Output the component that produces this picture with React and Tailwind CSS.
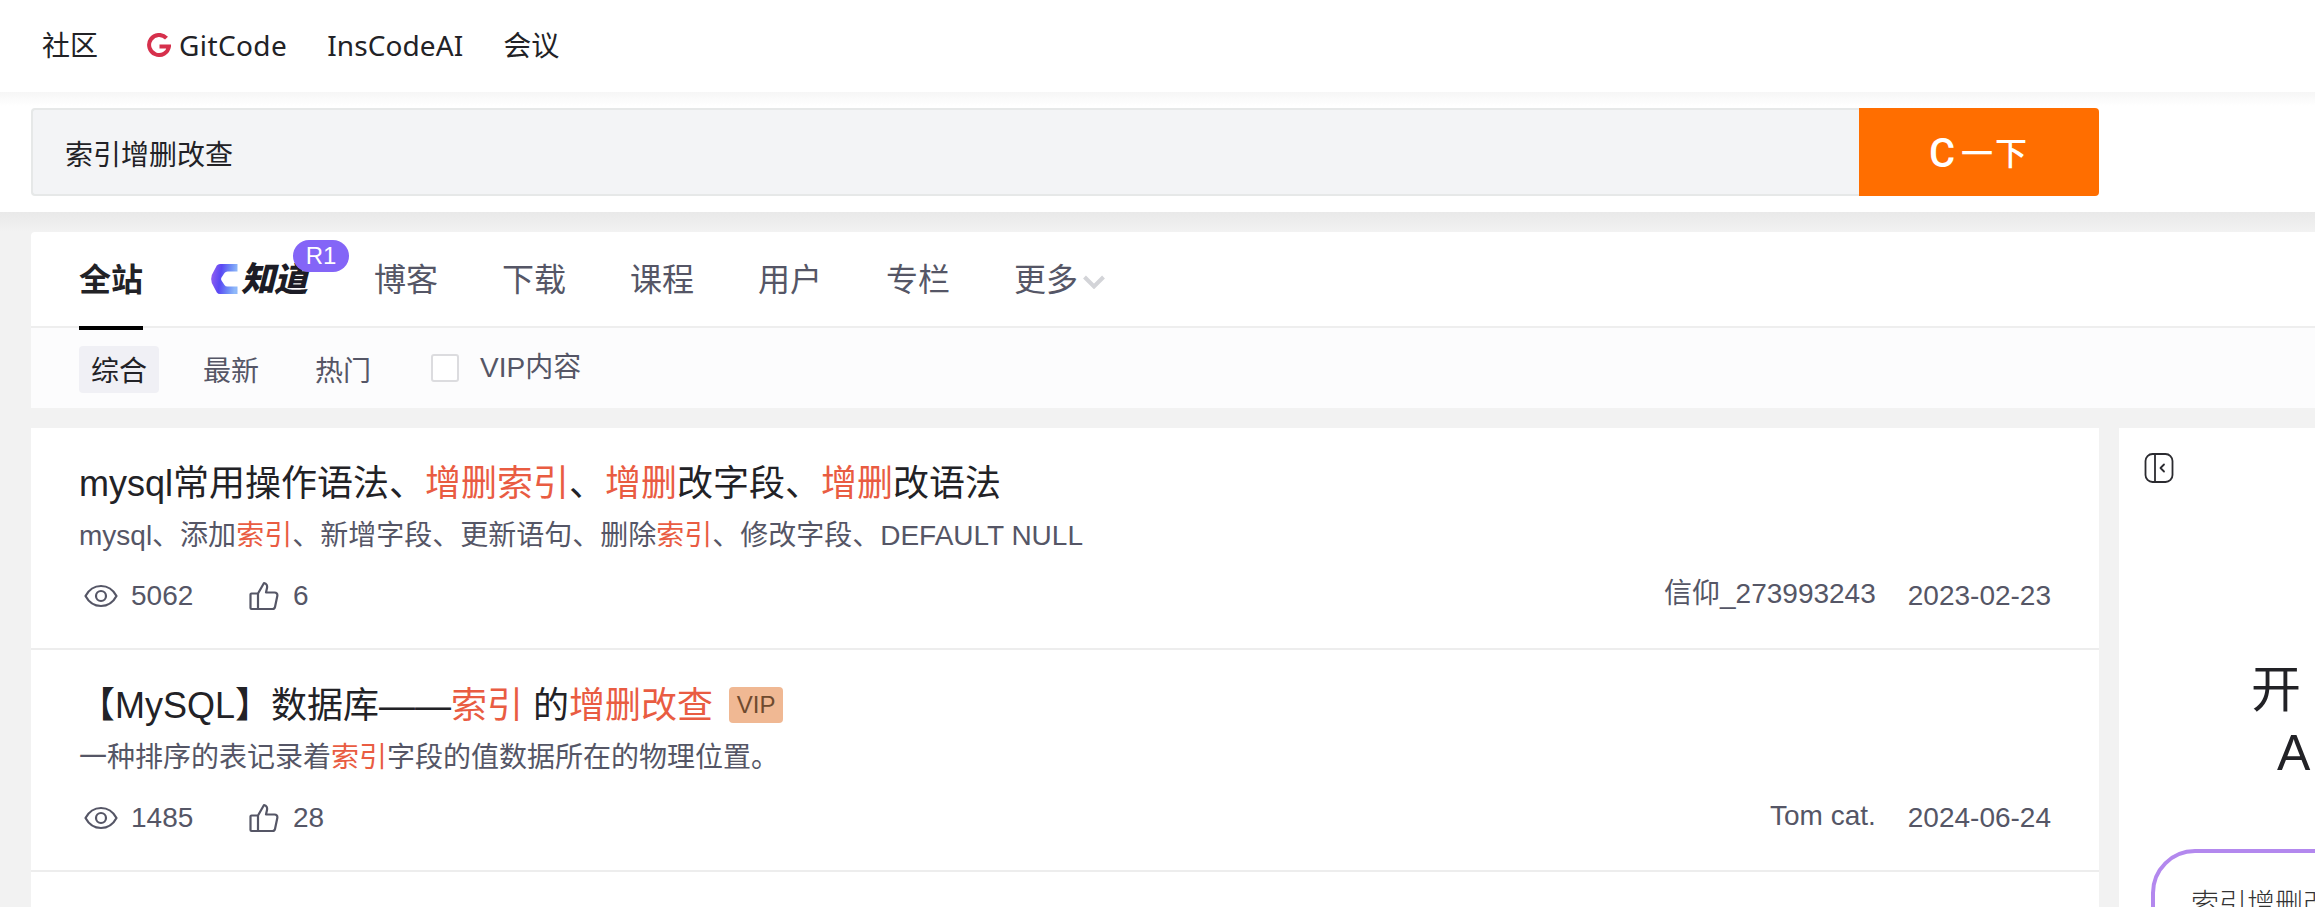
import React from "react";

const FONT = "font-['Liberation_Sans','Noto_Sans_CJK_SC',sans-serif]";

function Hl({ children }) {
  return <span className="text-[#e95c42]">{children}</span>;
}

function GitCodeIcon() {
  return (
    <svg width="24" height="24" viewBox="0 0 24 24" fill="none" className="mr-[8px]">
      <path d="M19.500 5.200A10 10 0 1 0 22 13.500H12.500" stroke="#d6304c" strokeWidth="4" strokeLinecap="butt" />
    </svg>
  );
}

function ZhidaoLogo() {
  return (
    <svg width="28" height="32" viewBox="0 0 28 32" className="mt-[6px]">
      <defs>
        <linearGradient id="zd" x1="0" y1="0" x2="1" y2="0.15">
          <stop offset="0" stopColor="#9a63f0" />
          <stop offset="0.4" stopColor="#5a48f4" />
          <stop offset="0.75" stopColor="#6f8df6" />
          <stop offset="1" stopColor="#8fb8f9" />
        </linearGradient>
      </defs>
      <path
        d="M10 1H27.500V8.500H17.500Q15.500 8.500 14.500 10L11.500 14.500Q10.500 16 11.500 17.500L14.500 22Q15.500 23.500 17.500 23.500H27.500V31H10Q8 31 6.800 29.500L1.800 20Q.500 16 1.800 12L6.800 2.500Q8 1 10 1Z"
        fill="url(#zd)"
      />
    </svg>
  );
}

function EyeIcon() {
  return (
    <svg width="34" height="26" viewBox="0 0 34 26" fill="none" stroke="#555666" strokeWidth="2.2">
      <path d="M1.500 13C5 6.500 10.500 3 17 3s12 3.500 15.500 10C29 19.500 23.500 23 17 23S5 19.500 1.500 13Z" strokeLinejoin="round" />
      <circle cx="17" cy="13" r="5" />
    </svg>
  );
}

function ThumbIcon() {
  return (
    <svg width="30" height="30" viewBox="0 0 30 30" fill="none" stroke="#555666" strokeWidth="2.2" strokeLinejoin="round">
      <path d="M9 28H2.500a1 1 0 0 1-1-1V13.500a1 1 0 0 1 1-1H9ZM9 12.500 15 2c2.500.5 3.500 2.500 3 5l-1 4.500h8.500c2 0 3.200 1.500 2.800 3.500l-2.300 11c-.3 1.300-1.200 2-2.500 2H9" />
    </svg>
  );
}

function Row({ title, desc, views, likes, author, date }) {
  return (
    <div className="bg-white border-b-2 border-[#ededed] px-12 pt-[34px] h-[222px]">
      <div className="flex items-center h-[44px] text-[36px] text-[#222226] leading-[44px] whitespace-nowrap">{title}</div>
      <div className="mt-[10px] h-[40px] text-[28px] leading-[40px] text-[#555666] whitespace-nowrap">{desc}</div>
      <div className="mt-[20px] flex items-center justify-between h-[40px] text-[28px] leading-[40px] text-[#555666]">
        <div className="flex items-center">
          <div className="ml-[5px] flex items-center w-[132px] gap-[13px]">
            <EyeIcon />
            <span>{views}</span>
          </div>
          <div className="ml-[33px] flex items-center gap-[14px]">
            <ThumbIcon />
            <span>{likes}</span>
          </div>
        </div>
        <div className="flex items-center gap-[32px] mr-0">
          <span className="-mt-[4px]">{author}</span>
          <span>{date}</span>
        </div>
      </div>
    </div>
  );
}

export default function App() {
  const tabs = ["博客", "下载", "课程", "用户", "专栏"];
  return (
    <div className={`${FONT} w-[2315px] h-[907px] overflow-hidden bg-[#f2f2f2]`}>
      <header className="relative h-[92px] bg-white flex items-center pl-[42px] pb-[3px] text-[28px] text-[#222226] font-['Noto_Sans','Noto_Sans_CJK_SC',sans-serif]">
        <span>社区</span>
        <span className="ml-[49px] flex items-center">
          <GitCodeIcon />
          <span className="tracking-[0.4px]">GitCode</span>
        </span>
        <span className="ml-[40px] tracking-[0.1px]">InsCodeAI</span>
        <span className="ml-[40px]">会议</span>
      </header>

      <div className="h-[120px] bg-white bg-gradient-to-b from-[#f6f6f6] to-white to-[14px] pl-[31px] pt-[16px]">
        <div className="flex w-[2068px] h-[88px]">
          <div className="flex-1 flex items-center bg-[#f3f4f6] border-2 border-r-0 border-[#e6e8e8] rounded-l-[4px] pl-[32px] pt-[3px] text-[28px] text-[#222226] font-['Noto_Sans','Noto_Sans_CJK_SC',sans-serif]">
            索引增删改查
          </div>
          <div className="w-[240px] flex items-center justify-center pt-[3px] bg-[#ff6e00] rounded-r-[4px] text-white text-[32px] tracking-[2px] font-medium font-['Roboto','Noto_Sans_CJK_SC',sans-serif]">
            <span className="text-[40px] leading-none mr-[4px]">C</span>一下
          </div>
        </div>
      </div>

      <div className="h-[20px] bg-gradient-to-b from-[#e9e9e9] to-[#f2f2f2]" />

      <main className="pl-[31px]">
        <section className="h-[176px] bg-white rounded-tl-[4px]">
          <nav className="h-[96px] relative flex items-start pl-12 border-b-2 border-[#eeeeee] text-[32px] text-[#555666] font-['Noto_Sans_CJK_SC',sans-serif]">
            <span className="relative h-[96px] leading-[90px] font-bold text-[#222226]">
              全站
              <span className="absolute left-0 right-0 bottom-[-2px] h-[4px] bg-black" />
            </span>
            <span className="relative ml-[67px] h-[94px] pb-[6px] flex items-center">
              <ZhidaoLogo />
              <span className="ml-[3px] text-[34px] font-black italic text-[#1c1c26] tracking-[-1px]">知道</span>
              <span className="absolute left-[83px] top-[8px] w-[56px] h-[32px] rounded-full bg-[#8465f7] text-white text-[24px] leading-[32px] text-center font-['Liberation_Sans',sans-serif]">
                R1
              </span>
            </span>
            <div className="ml-[67px] flex gap-[64px] leading-[90px]">
              {tabs.map((t) => (
                <span key={t}>{t}</span>
              ))}
              <span className="flex items-start">
                更多
                <svg width="22" height="14" viewBox="0 0 22 14" fill="none" className="ml-[5px] mt-[43px]">
                  <path d="M1.500 2L11 11.500L20.500 2" stroke="#d3d4d8" strokeWidth="4" />
                </svg>
              </span>
            </div>
          </nav>
          <div className="h-[80px] bg-[#fcfcfd] flex items-center pl-12 pt-[2px] text-[28px] text-[#555666] font-['Noto_Sans_CJK_SC',sans-serif]">
            <span className="w-[80px] h-[47px] leading-[47px] text-center rounded-[4px] bg-[#f0f0f5] text-[#222226] mr-[44px]">综合</span>
            <span className="mr-[56px]">最新</span>
            <span className="mr-[60px]">热门</span>
            <span className="w-[28px] h-[28px] border-2 border-[#dcdcdf] rounded-[3px] bg-white mr-[21px] -mt-[3px]" />
            <span className="-mt-[2px] font-['Liberation_Sans','Noto_Sans_CJK_SC',sans-serif]">VIP内容</span>
          </div>
        </section>

        <div className="mt-[20px] flex gap-[20px]">
          <div className="w-[2068px] shrink-0">
            <Row
              title={
                <span>
                  mysql常用操作语法、<Hl>增删索引</Hl>、<Hl>增删</Hl>改字段、<Hl>增删</Hl>改语法
                </span>
              }
              desc={
                <span>
                  mysql、添加<Hl>索引</Hl>、新增字段、更新语句、删除<Hl>索引</Hl>、修改字段、DEFAULT NULL
                </span>
              }
              views="5062"
              likes="6"
              author="信仰_273993243"
              date="2023-02-23"
            />
            <Row
              title={
                <>
                  <span>
                    【MySQL】数据库——<Hl>索引</Hl> 的<Hl>增删改查</Hl>
                  </span>
                  <span className="ml-[16px] -mt-[2px] w-[54px] h-[36px] rounded-[4px] bg-[#f0b893] text-[#6f4a2e] text-[24px] leading-[36px] text-center">VIP</span>
                </>
              }
              desc={
                <span>
                  一种排序的表记录着<Hl>索引</Hl>字段的值数据所在的物理位置。
                </span>
              }
              views="1485"
              likes="28"
              author="Tom cat."
              date="2024-06-24"
            />
            <div className="h-[40px] bg-white" />
          </div>

          <aside className="flex-1 min-w-0 h-[480px] bg-white overflow-hidden">
            <div className="pl-[25px] pt-[25px]">
              <svg width="30" height="30" viewBox="0 0 30 30" fill="none" stroke="#2b2b30" strokeWidth="1.800">
                <rect x="1.500" y="1" width="27" height="28" rx="7" />
                <path d="M11 1V29" />
                <path d="M20 11.500L16.500 15L20 18.500" strokeLinecap="round" strokeLinejoin="round" />
              </svg>
            </div>
            <div className="mt-[176px] text-[50px] leading-[63px] text-[#222226] whitespace-nowrap">
              <div className="pl-[132px]">开</div>
              <div className="pl-[158px]">A</div>
            </div>
            <div className="mt-[64px] ml-[32px] w-[400px] h-[200px] rounded-[44px] border-4 border-[#b388ee] pl-[36px] pt-[29px] text-[28px] leading-[40px] text-[#333] whitespace-nowrap font-['Noto_Sans_CJK_SC',sans-serif] font-light">
              索引增删改查
            </div>
          </aside>
        </div>
      </main>
    </div>
  );
}
